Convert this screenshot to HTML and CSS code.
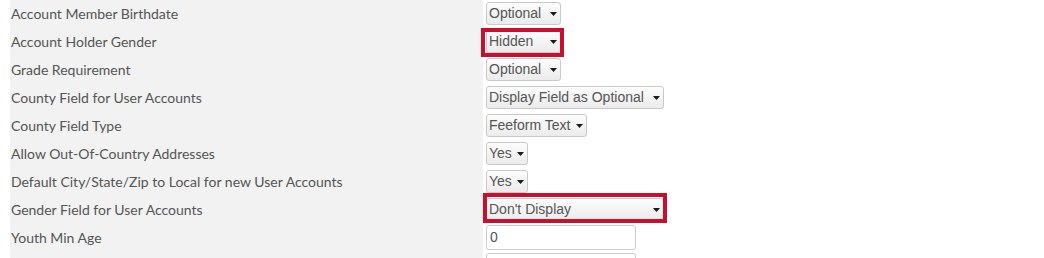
FILE: index.html
```html
<!DOCTYPE html>
<html lang="en">
<head>
<meta charset="utf-8">
<title>Account Settings</title>
<link rel="stylesheet" href="styles.css">
</head>
<body>
<div class="form">
  <div class="label">Account Member Birthdate</div>
  <div class="control"><span class="select w75">Optional<svg class="caret" width="7" height="4" viewBox="0 0 7 4"><path d="M0 0H7L3.5 4Z"/></svg></span></div>

  <div class="label">Account Holder Gender</div>
  <div class="control"><span class="hl hl-a"><span class="select w75">Hidden<svg class="caret" width="7" height="4" viewBox="0 0 7 4"><path d="M0 0H7L3.5 4Z"/></svg></span></span></div>

  <div class="label">Grade Requirement</div>
  <div class="control"><span class="select w75">Optional<svg class="caret" width="7" height="4" viewBox="0 0 7 4"><path d="M0 0H7L3.5 4Z"/></svg></span></div>

  <div class="label">County Field for User Accounts</div>
  <div class="control"><span class="select w178">Display Field as Optional<svg class="caret" width="7" height="4" viewBox="0 0 7 4"><path d="M0 0H7L3.5 4Z"/></svg></span></div>

  <div class="label">County Field Type</div>
  <div class="control"><span class="select w101">Feeform Text<svg class="caret" width="7" height="4" viewBox="0 0 7 4"><path d="M0 0H7L3.5 4Z"/></svg></span></div>

  <div class="label">Allow Out-Of-Country Addresses</div>
  <div class="control"><span class="select w42">Yes<svg class="caret" width="7" height="4" viewBox="0 0 7 4"><path d="M0 0H7L3.5 4Z"/></svg></span></div>

  <div class="label">Default City/State/Zip to Local for new User Accounts</div>
  <div class="control"><span class="select w42">Yes<svg class="caret" width="7" height="4" viewBox="0 0 7 4"><path d="M0 0H7L3.5 4Z"/></svg></span></div>

  <div class="label">Gender Field for User Accounts</div>
  <div class="control"><span class="hl hl-b"><span class="select w178">Don't Display<svg class="caret" width="7" height="4" viewBox="0 0 7 4"><path d="M0 0H7L3.5 4Z"/></svg></span></span></div>

  <div class="label">Youth Min Age</div>
  <div class="control"><input class="text" type="text" value="0"></div>

  <div class="label"></div>
  <div class="control"><input class="text" type="text" value=""></div>
</div>
</body>
</html>
```

FILE: styles.css
```css
html, body {
  margin: 0;
  padding: 0;
  background: #ffffff;
}

.form {
  display: grid;
  grid-template-columns: 473px 1fr;
  grid-auto-rows: 28px;
  margin-left: 10px;
  margin-top: -1px;
}

.label {
  background: #f2f2f2;
  padding-left: 1px;
  font-family: Lato, "Liberation Sans", sans-serif;
  font-size: 14px;
  color: #555555;
  display: flex;
  align-items: center;
  white-space: nowrap;
}

.control {
  padding-left: 3px;
  display: flex;
  align-items: center;
}

.select {
  box-sizing: border-box;
  height: 23px;
  display: inline-flex;
  align-items: center;
  justify-content: space-between;
  padding: 0 3px 0 2px;
  border: 1px solid #c9c9c9;
  border-radius: 3px;
  background: linear-gradient(#fdfdfd, #ebebeb);
  font-family: "Liberation Sans", Arial, sans-serif;
  font-size: 14px;
  color: #555555;
  white-space: nowrap;
}

.caret {
  fill: #1a1a1a;
  flex: none;
  margin-top: 1px;
}

.w42 { width: 42px; }
.w75 { width: 75px; }
.w101 { width: 101px; }
.w178 { width: 178px; }

.hl {
  position: relative;
  display: inline-flex;
}

.hl::after {
  content: "";
  position: absolute;
  border: 4px solid #c8102e;
  pointer-events: none;
}

.hl-a::after {
  left: -5px;
  right: -3px;
  top: -2px;
  bottom: -4px;
}

.hl-b::after {
  left: -3px;
  right: -3px;
  top: -5px;
  bottom: -2px;
}

.text {
  box-sizing: border-box;
  width: 150px;
  height: 25px;
  margin: 0;
  padding: 0 3px;
  border: 1px solid #cccccc;
  border-radius: 3px;
  background: #ffffff;
  font-family: "Liberation Sans", Arial, sans-serif;
  font-size: 14px;
  color: #555555;
}
```
